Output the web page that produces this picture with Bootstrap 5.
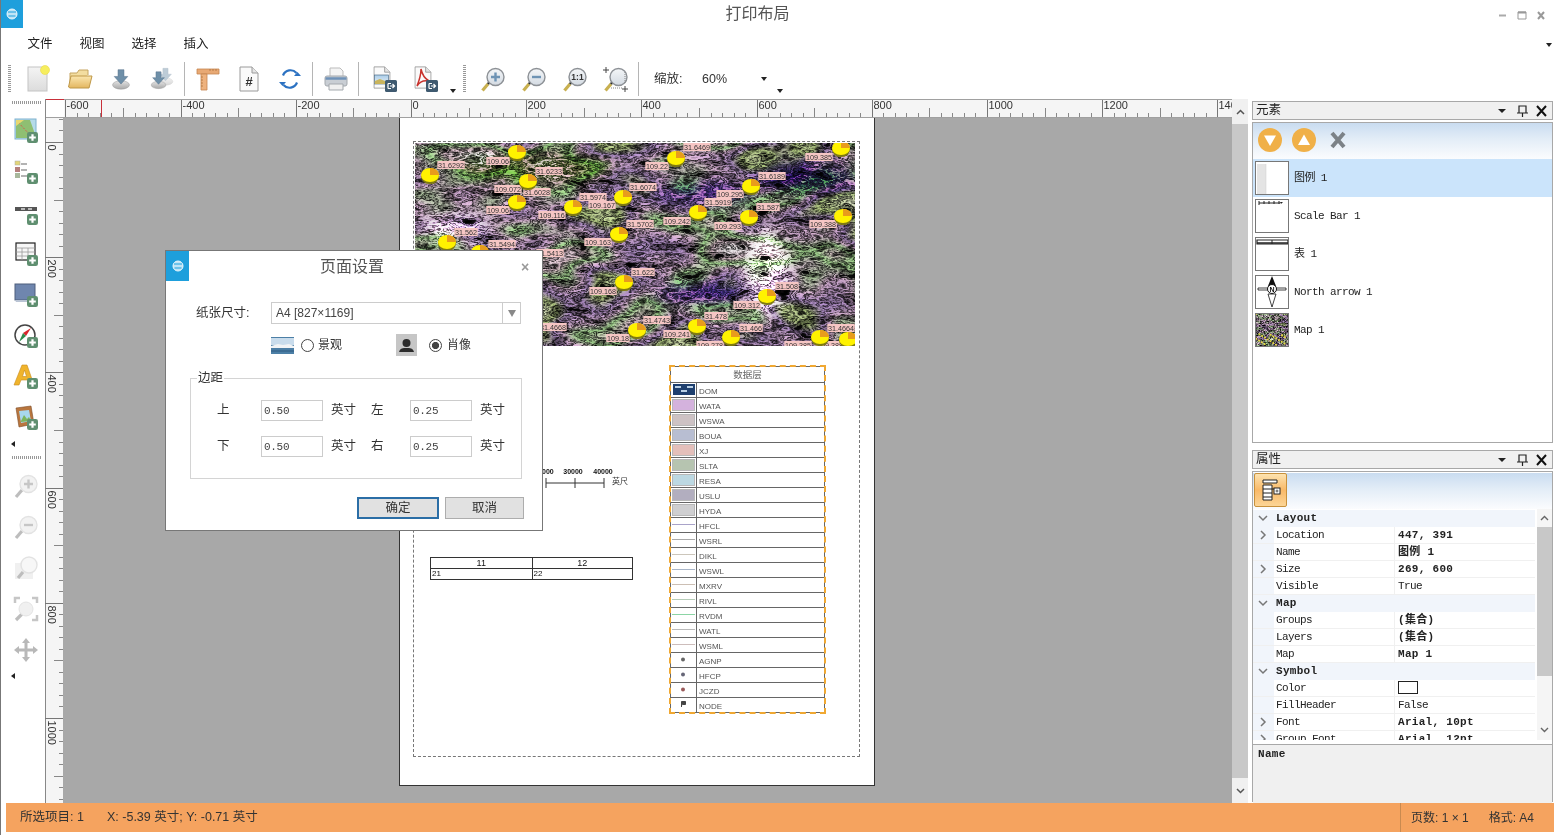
<!DOCTYPE html>
<html lang="zh">
<head>
<meta charset="UTF-8">
<title>打印布局</title>
<link href="https://cdn.jsdelivr.net/npm/bootstrap@5.3.3/dist/css/bootstrap.min.css" rel="stylesheet">
<style>
html, body { height: 835px; overflow: hidden; }
body { background: #fff; color: #222; font-family: "Liberation Sans", "Noto Sans CJK SC", sans-serif; font-size: 12px; border-left: 1px solid #777; }
svg { display: block; flex: none; }
.app-logo { width: 23px; height: 28px; background: #1e9fdc; margin-left: -1px; }
.title-bar { height: 28px; }
.title-text { font-size: 16px; color: #555; padding-right: 3px; padding-top: 2px; }
.menu-bar { height: 32px; padding-left: 13px; padding-right: 6px; padding-top: 7px; font-size: 12.5px; color: #222; }
.menu-item { width: 52px; text-align: center; }
.tool-bar { height: 38px; margin-bottom: 1px; padding-left: 7px; }
.grip-v { width: 3px; height: 28px; background: repeating-linear-gradient(180deg, #999 0 1px, #fff 1px 2px); }
.grip-h { width: 29px; height: 3px; margin-left: 11px; background: repeating-linear-gradient(90deg, #999 0 1px, #fff 1px 2px); }
.tool-btn { width: 41px; height: 38px; }
.tool-sep { width: 1px; height: 34px; background: #b5b5b5; margin: 0 2px; }
.tool-sep.is-wide { margin-right: 5px; }
.mini-down { width: 0; height: 0; border-left: 3.5px solid transparent; border-right: 3.5px solid transparent; border-top: 4px solid #222; }
.mini-left { width: 0; height: 0; border-top: 3.5px solid transparent; border-bottom: 3.5px solid transparent; border-right: 4px solid #222; margin-left: 10px; }
.zoom-lbl { font-size: 12.5px; color: #333; margin-left: 13px; width: 48px; }
.zoom-val { font-size: 12.5px; color: #333; width: 59px; }
.main-row { height: 704px; }
.left-tool { width: 44px; }
.left-btn { width: 44px; height: 41px; padding-left: 5px; }
.work-area { width: 1187px; }
.ruler-top { height: 19px; }
.ruler-left { width: 18px; }
.canvas-area { background: #a8a8a8; }
.sheet { width: 476px; height: 669px; margin-left: 336px; margin-top: -1px; background: #fff; border: 1px solid #333; }
.sheet-margin { left: 13px; top: 23px; width: 447px; height: 616px; border: 1px dashed #777; }
.sheet-map { left: 15px; top: 25px; width: 440px; height: 203px; }
.sheet-legend { left: 270px; top: 248px; width: 155px; height: 347px; outline: 2px dashed #f0a832; outline-offset: -1px; border: 1px solid #666; font-size: 8px; color: #555; }
.leg-title { height: 15px; line-height: 15px; text-align: center; font-size: 9.5px; color: #666; }
.leg-row { height: 15px; border-top: 1px solid #666; line-height: 17px; }
.leg-swatch { width: 26px; border-right: 1px solid #666; }
.leg-name { padding-left: 2px; }
.swatch-fill { width: 23px; height: 12px; margin: 1px 0 0 1px; border: 1px solid #b8b8b8; }
.swatch-line { height: 1px; width: 23px; margin: 6px 0 0 1px; }
.sheet-table { left: 30px; top: 439px; width: 203px; height: 23px; border: 1px solid #333; font-size: 8px; color: #111; }
.tbl-head { height: 11px; border-bottom: 1px solid #333; line-height: 11px; font-size: 9px; }
.tbl-cell { width: 50%; }
.tbl-cell + .tbl-cell { border-left: 1px solid #333; }
.tbl-body { height: 10px; line-height: 10px; padding-left: 1px; }
.sheet-scale { left: 130px; top: 347px; }
.vscroll { width: 16px; background: #f0f0f0; }
.vscroll-arrow { height: 25px; }
.vscroll-thumb { background: #c8c8c8; height: 654px; }
.side-col { width: 301px; margin-left: 4px; padding-top: 2px; }
.dock-head { height: 19px; background: #f0f0f0; border: 1px solid #a8a8a8; padding: 0 4px 0 3px; font-size: 12.5px; line-height: 17px; }
.dock-body { border: 1px solid #a8a8a8; margin-top: 2px; }
.dock-tools { height: 36px; background: linear-gradient(180deg, #c9dcf0 0, #e3edf7 45%, #fbfcfe 100%); }
.el-row { height: 38px; padding-left: 2px; }
.el-row.is-on { background: #cbe4fb; }
.el-thumb { width: 34px; height: 34px; border: 1px solid #777; background: #fff; }
.mono-txt { font-family: "Liberation Mono", "Noto Sans CJK SC", monospace; font-size: 11px; letter-spacing: -.6px; color: #222; }
.el-name { margin-left: 5px; }
.prop-btn { width: 33px; height: 34px; margin: 1px 0 0 1px; border: 1px solid #c8913c; border-radius: 2px; background: linear-gradient(180deg, #fde3b0 0, #f9b968 50%, #fcd596 100%); }
.prop-grid { height: 235px; }
.prop-main { width: 283px; height: 231px; padding-top: 1px; }
.prop-row { height: 17px; line-height: 16px; border-bottom: 1px solid #f0f0f0; }
.prop-row.is-cat { background: #f1f5fb; border-bottom: 0; }
.prop-gut { width: 21px; background: #f1f5fb; }
.prop-key { width: 120px; padding-left: 2px; }
.prop-val { padding-left: 3px; border-left: 1px solid #f0f0f0; }
.is-cat .prop-key { width: 240px; }
.mono-bold { font-weight: 700; letter-spacing: .3px; }
.prop-swatch { width: 20px; height: 13px; border: 1px solid #222; margin-top: 1px; }
.prop-scroll { width: 15px; margin-left: 2px; background: #f5f5f5; height: 231px; }
.prop-thumb { height: 149px; background: #c8c8c8; }
.prop-desc { height: 59px; background: #f0f0f0; border-top: 1px solid #a8a8a8; padding: 1px 0 0 5px; }
.status-bar { height: 29px; margin: 0 4px 0 5px; background: #f5a35f; font-size: 12.5px; color: #333; padding-left: 14px; }
.status-right { border-left: 1px solid #c98a50; height: 29px; padding-left: 10px; padding-right: 20px; margin-left: auto; width: 154px; font-size: 12px; }
.page-dlg { left: 165px; top: 250px; width: 378px; height: 281px; background: #fff; border: 1px solid #777; }
.dlg-logo { width: 23px; height: 30px; background: #1e9fdc; }
.dlg-title { font-size: 16px; color: #555; padding-right: 6px; padding-top: 1px; }
.dlg-close { width: 21px; font-size: 14px; font-weight: 700; color: #999; padding-top: 3px; }
.dlg-row1 { margin: 21px 0 0 30px; height: 22px; }
.dlg-lbl { width: 75px; font-size: 12.5px; color: #333; }
.paper-select { width: 250px; height: 22px; border: 1px solid #ccc; padding-left: 4px; font-size: 12px; color: #444; }
.paper-arrow { width: 18px; height: 20px; border-left: 1px solid #ccc; }
.arrow-gray { width: 0; height: 0; border-left: 4px solid transparent; border-right: 4px solid transparent; border-top: 7px solid #888; }
.dlg-row2 { margin: 10px 0 0 105px; height: 22px; font-size: 12px; color: #333; }
.page-radio.form-check-input { width: 13px; height: 13px; margin: 0 4px 0 7px; background-color: #fff; border: 1px solid #444; background-image: none; box-shadow: none; }
.page-radio.form-check-input:checked { background-color: #fff; border-color: #444; background-image: radial-gradient(circle, #444 0 3.4px, #fff 3.8px); }
.orient-b { margin-left: 54px; }
.dlg-margins { margin: 14px 0 0 24px; width: 332px; height: 109px; border: 1px solid #d4d4d4; padding: 0 0 0 26px; }
.dlg-margins legend { float: none; width: auto; margin: 0 0 0 -20px; padding: 0 1px; font-size: 12.5px; line-height: 16px; color: #333; }
.margin-grid { display: grid; grid-template-columns: 44px 62px 48px 39px 62px 40px; row-gap: 15px; margin-top: 14px; align-items: center; font-size: 12.5px; color: #333; white-space: nowrap; }
.margin-inp.form-control { height: 21px; min-height: 0; padding: 0 2px; border: 1px solid #ccc; border-radius: 0; box-shadow: none; font-family: "Liberation Mono", monospace; font-size: 11px; color: #444; letter-spacing: -.3px; }
.margin-unit { padding-left: 8px; }
.dlg-btns { margin: 18px 18px 0 0; gap: 6px; }
.dlg-btn.btn { height: 22px; padding: 0; border-radius: 0; background: #e1e1e1; color: #333; font-size: 12.5px; line-height: 18px; border: 1px solid #adadad; width: 79px; }
.dlg-btn.is-main { width: 82px; border: 2px solid #2b6ea6; }
.map-light { mix-blend-mode: overlay; }
</style>
</head>
<body>
<svg width="0" height="0" class="position-absolute">
  <defs>
    <linearGradient id="glass" x1="0" y1="0" x2="0" y2="1"><stop offset="0" stop-color="#f4f6f8"/><stop offset="1" stop-color="#d3dae2"/></linearGradient>
    <linearGradient id="pageg" x1="0" y1="0" x2="0" y2="1"><stop offset="0" stop-color="#f4f4f4"/><stop offset="1" stop-color="#dcdcdc"/></linearGradient>
    <linearGradient id="foldg" x1="0" y1="0" x2="0" y2="1"><stop offset="0" stop-color="#fbe6ae"/><stop offset="1" stop-color="#e3b660"/></linearGradient>
    <linearGradient id="discg" x1="0" y1="0" x2="0" y2="1"><stop offset="0" stop-color="#e4e4e4"/><stop offset="1" stop-color="#a8a8a8"/></linearGradient>
    <linearGradient id="sky" x1="0" y1="0" x2="0" y2="1"><stop offset="0" stop-color="#a9cce8"/><stop offset="1" stop-color="#e8f0f6"/></linearGradient>
    <filter id="terrain" x="0" y="0" width="100%" height="100%" color-interpolation-filters="sRGB">
      <feTurbulence type="fractalNoise" baseFrequency="0.045 0.11" numOctaves="5" seed="3" result="a"/>
      <feColorMatrix in="a" values="1 0 0 0 0 1 0 0 0 0 1 0 0 0 0 0 0 0 0 1"/>
      <feComponentTransfer result="lum">
        <feFuncR type="table" tableValues="0 0 0 .03 .06 .6 .1 .55 .95 .25 .8 .16 .95 1 .7 1 1"/>
        <feFuncG type="table" tableValues="0 0 0 .03 .06 .6 .1 .55 .95 .25 .8 .16 .95 1 .7 1 1"/>
        <feFuncB type="table" tableValues="0 0 0 .03 .06 .6 .1 .55 .95 .25 .8 .16 .95 1 .7 1 1"/>
      </feComponentTransfer>
      <feTurbulence type="fractalNoise" baseFrequency="0.012 0.022" numOctaves="2" seed="8" result="b"/>
      <feColorMatrix in="b" values="1 0 0 0 0 1 0 0 0 0 1 0 0 0 0 0 0 0 0 1"/>
      <feComponentTransfer result="tint">
        <feFuncR type="table" tableValues="1 1 .9 .72 .72 .9 .66 .95 1 1 1"/>
        <feFuncG type="table" tableValues="1 1 .95 .82 .58 .74 .88 .82 1 1 1"/>
        <feFuncB type="table" tableValues="1 1 .75 .52 .82 .88 .58 .88 1 1 1"/>
      </feComponentTransfer>
      <feBlend in="lum" in2="tint" mode="multiply"/>
    </filter>
    <filter id="soft"><feGaussianBlur stdDeviation="7"/></filter>
    <symbol id="add" viewBox="0 0 10 10"><rect width="10" height="10" rx="2" fill="#5f8f70"/><path d="M5 2v6M2 5h6" stroke="#fff" stroke-width="2"/></symbol>
    <symbol id="mag" viewBox="0 0 26 26"><path d="M2.5 24.5 8 18" stroke="#c8b050" stroke-width="3.2"/><path d="M8 18l2.5-3" stroke="#222" stroke-width="2.6"/><circle cx="15.5" cy="11" r="8.500" fill="url(#glass)" stroke="#8d9196" stroke-width="1.4"/></symbol>
    <symbol id="saver" viewBox="0 0 26 26"><ellipse cx="13" cy="20" rx="10" ry="5" fill="url(#discg)" stroke="#999" stroke-width=".6"/><path d="M9.5 2h7v8h4.500L13 19 5 10h4.500z" fill="#6e8fa8" stroke="#54708a" stroke-width=".6"/></symbol>
    <symbol id="out-badge" viewBox="0 0 12 12"><rect width="12" height="12" rx="1.500" fill="#3f5a70"/><path d="M3 3.500h3M3 8.500h3M3 3.500v5M5 6h4M7.500 4 9.500 6 7.500 8" stroke="#fff" stroke-width="1.200" fill="none"/></symbol>
    <symbol id="fold-page" viewBox="0 0 20 26"><path d="M1 1h12l6 6v18H1z" fill="#fafafa" stroke="#9a9a9a"/><path d="M13 1v6h6" fill="#e4e4e4" stroke="#9a9a9a"/></symbol>
  </defs>
</svg>

<div class="title-bar d-flex">
  <div class="app-logo d-flex align-items-center justify-content-center">
    <svg width="14" height="14" viewBox="0 0 14 14"><circle cx="7" cy="7" r="5" fill="#bfe4f6" stroke="#e9f7fd"/><path d="M3 5h8M3.500 9h7" stroke="#1e9fdc" stroke-width="1.200"/></svg>
  </div>
  <div class="title-text flex-grow-1 text-center">打印布局</div>
  <svg width="63" height="28" viewBox="0 0 63 28"><path d="M4 15.500h7" stroke="#aaa" stroke-width="2"/><path d="M23 12h8v7h-8z" fill="none" stroke="#999"/><path d="M23 12.500h8" stroke="#999" stroke-width="2"/><path d="M43 12l6 7M49 12l-6 7" stroke="#999" stroke-width="2"/></svg>
</div>

<div class="menu-bar d-flex">
  <div class="menu-item">文件</div>
  <div class="menu-item">视图</div>
  <div class="menu-item">选择</div>
  <div class="menu-item">插入</div>
  <div class="mini-down ms-auto mt-2"></div>
</div>

<div class="tool-bar d-flex align-items-center">
  <div class="grip-v"></div>
  <div style="width:7px"></div>
  <div class="tool-btn d-flex align-items-center justify-content-center"><svg width="26" height="30" viewBox="0 0 26 30"><rect x="2" y="3" width="19" height="24" fill="url(#pageg)" stroke="#c4c4c4"/><circle cx="19" cy="6" r="4.500" fill="#f6ee5e" stroke="#e9d84a" stroke-width=".6"/></svg></div>
  <div class="tool-btn d-flex align-items-center justify-content-center"><svg width="26" height="24" viewBox="0 0 26 24"><path d="M3 20V6h7l2-3h9v5" fill="#f3dda0" stroke="#c6a560"/><path d="M1.500 20 4 9h21l-3 12H3z" fill="url(#foldg)" stroke="#bf9848"/></svg></div>
  <div class="tool-btn d-flex align-items-center justify-content-center"><svg width="22" height="24" viewBox="0 0 26 26"><use href="#saver"/></svg></div>
  <div class="tool-btn d-flex align-items-center justify-content-center"><svg width="26" height="24" viewBox="0 0 30 26"><g opacity=".45"><svg x="8" y="-2" width="22" height="24" viewBox="0 0 26 26"><use href="#saver"/></svg></g><svg x="0" y="2" width="22" height="24" viewBox="0 0 26 26"><use href="#saver"/></svg></svg></div>
  <div class="tool-sep"></div>
  <div class="tool-btn d-flex align-items-center justify-content-center"><svg width="24" height="24" viewBox="0 0 24 24"><path d="M1 2h22v5H1z" fill="#e8a974" stroke="#c58650" stroke-width=".8"/><path d="M5 7h6v16H5z" fill="#eeb27e" stroke="#c58650" stroke-width=".8"/><path d="M14 2v2M17 2v2M20 2v2M5 10h2M5 13h2M5 16h2M5 19h2" stroke="#a56a38" stroke-width=".7"/></svg></div>
  <div class="tool-btn d-flex align-items-center justify-content-center"><svg width="20" height="26" viewBox="0 0 20 26"><use href="#fold-page"/><text x="10" y="20" text-anchor="middle" font-family="Liberation Sans" font-weight="700" font-size="13" fill="#333">#</text></svg></div>
  <div class="tool-btn d-flex align-items-center justify-content-center"><svg width="22" height="24" viewBox="0 0 22 24"><path d="M4 8.500A8 8 0 0 1 17.500 6M18 15.500A8 8 0 0 1 4.500 18" fill="none" stroke="#2c72c2" stroke-width="2.200"/><path d="M15 9h7l-3.500-4zM7 15H0l3.500 4z" fill="#2c72c2"/></svg></div>
  <div class="tool-sep"></div>
  <div class="tool-btn d-flex align-items-center justify-content-center"><svg width="24" height="24" viewBox="0 0 24 24"><path d="M6 1h10l3 3v7H6z" fill="#f4f4f4" stroke="#bbb"/><rect x="1" y="9" width="22" height="10" rx="2" fill="#c9ced4" stroke="#a4a9ae"/><path d="M1.500 11.500h21" stroke="#6f92b8" stroke-width="2.500"/><path d="M5 17h14v6H5z" fill="#f0f0f0" stroke="#a4a9ae"/></svg></div>
  <div class="tool-sep is-wide"></div>
  <div class="tool-btn d-flex align-items-center justify-content-center"><svg width="24" height="26" viewBox="0 0 24 26"><svg width="18" height="23" viewBox="0 0 20 26"><use href="#fold-page"/></svg><rect x="1.500" y="9" width="14" height="9" fill="url(#sky)" stroke="#516f8a" stroke-width=".7"/><path d="M1.800 18v-3l5-2 8 3v2z" fill="#c9b45c"/><svg x="12" y="14" width="12" height="12"><use href="#out-badge"/></svg></svg></div>
  <div class="tool-btn d-flex align-items-center justify-content-center"><svg width="24" height="26" viewBox="0 0 24 26"><svg width="18" height="23" viewBox="0 0 20 26"><use href="#fold-page"/></svg><path d="M7 3c1 5 3 9 8 12-5-1-9 0-12 5 2-5 4-10 4-17z" fill="none" stroke="#c8322c" stroke-width="1.500"/><svg x="12" y="14" width="12" height="12"><use href="#out-badge"/></svg></svg></div>
  <div class="mini-down ms-1 mt-4"></div>
  <div style="width:7px"></div>
  <div class="grip-v"></div>
  <div style="width:6px"></div>
  <div class="tool-btn d-flex align-items-center justify-content-center"><svg width="26" height="26" viewBox="0 0 26 26"><use href="#mag"/><path d="M15.500 6.500v9M11 11h9" stroke="#6e93b4" stroke-width="2.400"/></svg></div>
  <div class="tool-btn d-flex align-items-center justify-content-center"><svg width="26" height="26" viewBox="0 0 26 26"><use href="#mag"/><path d="M11 11h9" stroke="#6e93b4" stroke-width="2.400"/></svg></div>
  <div class="tool-btn d-flex align-items-center justify-content-center"><svg width="26" height="26" viewBox="0 0 26 26"><use href="#mag"/><text x="15.500" y="14" text-anchor="middle" font-family="Liberation Sans" font-weight="700" font-size="8.500" fill="#333">1:1</text></svg></div>
  <div class="tool-btn d-flex align-items-center justify-content-center"><svg width="26" height="26" viewBox="0 0 26 26"><use href="#mag"/><path d="M3 1v6M0 4h6M22 20v6M19 23h6" stroke="#444"/><path d="M8 22h12M22 6v12" stroke="#888" stroke-dasharray="1 1"/></svg></div>
  <div class="tool-sep"></div>
  <div class="zoom-lbl">缩放:</div>
  <div class="zoom-val">60%</div>
  <div class="mini-down"></div>
  <div class="mini-down mt-4" style="margin-left:10px"></div>
</div>

<div class="main-row d-flex">
  <div class="left-tool d-flex flex-column">
    <div class="grip-h" style="margin-top:2px;margin-bottom:6.5px"></div>
    <div class="left-btn d-flex align-items-center justify-content-center"><svg width="26" height="26" viewBox="0 0 26 26"><rect x="2" y="1" width="21" height="20" fill="#b5dbe9" stroke="#7fb1cf"/><path d="M3 2h14l5 14-6 4H3z" fill="#8fbf72"/><path d="M3 2l16 17" stroke="#d45e4c" stroke-dasharray="2 1.500"/><path d="M3 2h8l-8 6z" fill="#e8d870"/><svg x="14" y="14" width="11" height="11"><use href="#add"/></svg></svg></div>
    <div class="left-btn d-flex align-items-center justify-content-center"><svg width="26" height="26" viewBox="0 0 26 26"><rect x="2" y="2" width="5" height="4" fill="#e3d678" stroke="#aaa" stroke-width=".5"/><rect x="2" y="8" width="5" height="5" fill="#b47f7c"/><rect x="2" y="14" width="5" height="5" fill="#a8b89c"/><path d="M8 5h6M8 11h6M8 17h6" stroke="#9b9b9b" stroke-width="1.300"/><svg x="14" y="14" width="11" height="11"><use href="#add"/></svg></svg></div>
    <div class="left-btn d-flex align-items-center justify-content-center"><svg width="26" height="26" viewBox="0 0 26 26"><rect x="2" y="7" width="22" height="4" fill="#555"/><path d="M8 9h4M15 9h4" stroke="#ddd" stroke-width="1.500"/><svg x="14" y="14" width="11" height="11"><use href="#add"/></svg></svg></div>
    <div class="left-btn d-flex align-items-center justify-content-center"><svg width="26" height="26" viewBox="0 0 26 26"><rect x="3" y="2" width="19" height="17" fill="#f7f7f7" stroke="#222" stroke-width="1.200"/><path d="M3 7h19M3 11h19M3 15h19M9 7v12M15 7v12" stroke="#999" stroke-width=".8"/><svg x="14" y="14" width="11" height="11"><use href="#add"/></svg></svg></div>
    <div class="left-btn d-flex align-items-center justify-content-center"><svg width="26" height="26" viewBox="0 0 26 26"><rect x="2" y="2" width="20" height="16" fill="#6f86ae" stroke="#4e5f7c"/><path d="M2 18h20v2H3z" fill="#bac4d4"/><svg x="14" y="14" width="11" height="11"><use href="#add"/></svg></svg></div>
    <div class="left-btn d-flex align-items-center justify-content-center"><svg width="26" height="26" viewBox="0 0 26 26"><circle cx="12" cy="12" r="10" fill="#fff" stroke="#444" stroke-width="1.500"/><path d="M18 5l-5 8-3-3z" fill="#d8262c"/><path d="M6 19l4-9 3 3z" fill="#2e8b4c"/><svg x="14" y="14" width="11" height="11"><use href="#add"/></svg></svg></div>
    <div class="left-btn d-flex align-items-center justify-content-center"><svg width="26" height="26" viewBox="0 0 26 26"><path d="M1 21 9 1h5l7 20h-5l-1.500-5H8l-2 5zM9.500 12.500h4L11.500 6z" fill="#f0b42c" stroke="#c68a1e" stroke-width=".6" fill-rule="evenodd"/><svg x="14" y="14" width="11" height="11"><use href="#add"/></svg></svg></div>
    <div class="left-btn d-flex align-items-center justify-content-center"><svg width="26" height="26" viewBox="0 0 26 26"><path d="M3 3l15-2 3 18-15 3z" fill="#b9763e" stroke="#7c4c26" stroke-width=".6"/><path d="M6 6l10-1 2 11-10 2z" fill="#a7d7ec"/><path d="M7.500 17 11 10l3 4 2-2 2 4z" fill="#7db55a"/><svg x="14" y="14" width="11" height="11"><use href="#add"/></svg></svg></div>
    <div class="d-flex align-items-center" style="height:10px;margin-top:.5px"><div class="mini-left"></div></div>
    <div class="grip-h" style="margin-top:6.5px;margin-bottom:7px"></div>
    <div class="left-btn d-flex align-items-center justify-content-center"><svg width="26" height="26" viewBox="0 0 26 26" opacity=".55"><path d="M3 24 9 17" stroke="#888" stroke-width="3.200"/><circle cx="15.500" cy="11" r="8.500" fill="#e9e9e9" stroke="#ccc" stroke-width="1.400"/><path d="M15.500 6.500v9M11 11h9" stroke="#999" stroke-width="2.400"/></svg></div>
    <div class="left-btn d-flex align-items-center justify-content-center"><svg width="26" height="26" viewBox="0 0 26 26" opacity=".55"><path d="M3 24 9 17" stroke="#888" stroke-width="3.200"/><circle cx="15.500" cy="11" r="8.500" fill="#e9e9e9" stroke="#ccc" stroke-width="1.400"/><path d="M11 11h9" stroke="#999" stroke-width="2.400"/></svg></div>
    <div class="left-btn d-flex align-items-center justify-content-center"><svg width="26" height="26" viewBox="0 0 26 26" opacity=".55"><rect x="2" y="8" width="18" height="16" fill="#e4e4e4"/><path d="M5 23 10 17" stroke="#888" stroke-width="3.200"/><circle cx="16" cy="10" r="8" fill="#f2f2f2" stroke="#ccc" stroke-width="1.400"/></svg></div>
    <div class="left-btn d-flex align-items-center justify-content-center"><svg width="26" height="26" viewBox="0 0 26 26" opacity=".55"><path d="M2 7V2h5M19 2h5v5M24 19v5h-5" fill="none" stroke="#999" stroke-width="2.500"/><path d="M3 24l6-6" stroke="#888" stroke-width="3.200"/><circle cx="13" cy="13" r="7" fill="#e4e4e4" stroke="#ccc"/></svg></div>
    <div class="left-btn d-flex align-items-center justify-content-center"><svg width="24" height="24" viewBox="0 0 24 24" opacity=".6"><path d="M12 0l4 5h-2.500v5.500H19V8l5 4-5 4v-2.500h-5.500V19H16l-4 5-4-5h2.500v-5.500H5V16l-5-4 5-4v2.500h5.500V5H8z" fill="#8a8a8a"/></svg></div>
    <div class="d-flex align-items-center" style="height:10px"><div class="mini-left"></div></div>
  </div>

  <div class="work-area d-flex flex-column">
    <div class="ruler-top" id="rulerTop"></div>
    <div class="d-flex flex-grow-1 overflow-hidden">
      <div class="ruler-left" id="rulerLeft"></div>
      <div class="canvas-area flex-grow-1 overflow-hidden">
        <div class="sheet position-relative">
          <div class="sheet-margin position-absolute"></div>
          <div class="sheet-map position-absolute overflow-hidden" id="mapBox"></div>
          <svg class="sheet-scale position-absolute" width="110" height="26" viewBox="0 0 110 26">
            <path d="M16 18h58M16 13v10M45 13v10M74 13v10" stroke="#333" fill="none"/>
            <g font-family="Liberation Sans" font-size="7" font-weight="700" fill="#111" text-anchor="middle"><text x="14" y="9">20000</text><text x="43" y="9">30000</text><text x="73" y="9">40000</text></g>
            <text x="82" y="19" font-family="Noto Sans CJK SC" font-size="8" fill="#333">英尺</text>
          </svg>
          <div class="sheet-table position-absolute text-center">
            <div class="tbl-head d-flex"><div class="tbl-cell">11</div><div class="tbl-cell">12</div></div>
            <div class="d-flex text-start"><div class="tbl-cell tbl-body">21</div><div class="tbl-cell tbl-body">22</div></div>
          </div>
          <div class="sheet-legend position-absolute" id="legendBox"><div class="leg-title">数据层</div></div>
        </div>
      </div>
    </div>
  </div>

  <div class="vscroll d-flex flex-column">
    <div class="vscroll-arrow d-flex align-items-center justify-content-center"><svg width="9" height="6" viewBox="0 0 9 6"><path d="M1 5l3.500-3.500L8 5" fill="none" stroke="#555" stroke-width="1.500"/></svg></div>
    <div class="vscroll-thumb"></div>
    <div class="vscroll-arrow d-flex align-items-center justify-content-center"><svg width="9" height="6" viewBox="0 0 9 6"><path d="M1 1l3.500 3.500L8 1" fill="none" stroke="#555" stroke-width="1.500"/></svg></div>
  </div>

  <div class="side-col">
    <div class="dock-head d-flex align-items-center justify-content-between">
      <span>元素</span>
      <svg width="52" height="14" viewBox="0 0 52 14"><path d="M2 5h8l-4 4z" fill="#222"/><path d="M23 2h7v7h-7zM26.500 9v4M21 9h11" fill="none" stroke="#222" stroke-width="1.200"/><path d="M41 2l9 10M50 2l-9 10" stroke="#111" stroke-width="2"/></svg>
    </div>
    <div class="dock-body" style="height:321px">
      <div class="dock-tools">
        <svg width="100" height="36" viewBox="0 0 100 36"><circle cx="17" cy="17" r="12" fill="#f0b048"/><path d="M11 12.500h12L17 23z" fill="#fff"/><circle cx="51" cy="17" r="12" fill="#f0b048"/><path d="M45 22h12L51 11.500z" fill="#fff"/><path d="M79 10l12 14M91 10 79 24" stroke="#7c8287" stroke-width="4"/></svg>
      </div>
      <div class="el-row is-on d-flex align-items-center">
        <div class="el-thumb"><svg width="32" height="32" viewBox="0 0 32 32"><rect x="1" y="2" width="9" height="30" fill="#e4e4e4"/><path d="M10 2v30" stroke="#ccc" stroke-width=".5"/></svg></div>
        <span class="mono-txt el-name">图例 1</span>
      </div>
      <div class="el-row d-flex align-items-center">
        <div class="el-thumb"><svg width="32" height="32" viewBox="0 0 32 32"><path d="M3 3h21M3 1v4M8 1v3M13 1v3M18 1v3M23 1v3" stroke="#222"/><path d="M24 2h3l-2 2z" fill="#222"/></svg></div>
        <span class="mono-txt el-name">Scale Bar 1</span>
      </div>
      <div class="el-row d-flex align-items-center">
        <div class="el-thumb"><svg width="32" height="32" viewBox="0 0 32 32"><path d="M1 2h31v4H1z" fill="#fff" stroke="#222" stroke-width="1.200"/><path d="M16 2v4" stroke="#222"/><path d="M1 5h31" stroke="#222" stroke-width="1.500"/></svg></div>
        <span class="mono-txt el-name">表 1</span>
      </div>
      <div class="el-row d-flex align-items-center">
        <div class="el-thumb"><svg width="32" height="32" viewBox="0 0 32 32"><path d="M16 0l4 10h-8z" fill="#111"/><path d="M2 12h10v2H2zM20 12h10v2H20z" fill="#fff" stroke="#111" stroke-width=".8"/><path d="M12 18h8l-4 13z" fill="#fff" stroke="#111" stroke-width=".8"/><circle cx="16" cy="13" r="4.500" fill="#fff" stroke="#111"/><text x="16" y="16" text-anchor="middle" font-family="Liberation Sans" font-size="7" font-weight="700" fill="#111">N</text></svg></div>
        <span class="mono-txt el-name">North arrow 1</span>
      </div>
      <div class="el-row d-flex align-items-center">
        <div class="el-thumb" id="mapThumb"></div>
        <span class="mono-txt el-name">Map 1</span>
      </div>
    </div>
    <div class="dock-head d-flex align-items-center justify-content-between" style="margin-top:7px">
      <span>属性</span>
      <svg width="52" height="14" viewBox="0 0 52 14"><path d="M2 5h8l-4 4z" fill="#222"/><path d="M23 2h7v7h-7zM26.500 9v4M21 9h11" fill="none" stroke="#222" stroke-width="1.200"/><path d="M41 2l9 10M50 2l-9 10" stroke="#111" stroke-width="2"/></svg>
    </div>
    <div class="dock-body" style="height:331px">
      <div class="dock-tools">
        <div class="prop-btn d-flex align-items-center justify-content-center">
          <svg width="22" height="24" viewBox="0 0 22 24"><path d="M3 2h14v3H3zM3 7h9v15H3z" fill="#fff" stroke="#222"/><path d="M3 11h9M3 15h9M3 19h9M12 11h4" stroke="#222"/><rect x="14" y="10" width="6" height="6" fill="#fff" stroke="#222"/><path d="M15.500 13h3M17 11.500v3" stroke="#222" stroke-width=".7"/></svg>
        </div>
      </div>
      <div class="prop-grid d-flex overflow-hidden">
        <div class="prop-main overflow-hidden" id="propRows"></div>
        <div class="prop-scroll d-flex flex-column">
          <div class="d-flex align-items-center justify-content-center" style="height:18px"><svg width="9" height="6" viewBox="0 0 9 6"><path d="M1 5l3.500-3.500L8 5" fill="none" stroke="#666" stroke-width="1.400"/></svg></div>
          <div class="prop-thumb"></div>
          <div class="d-flex align-items-center justify-content-center" style="height:64px;padding-top:44px"><svg width="9" height="6" viewBox="0 0 9 6"><path d="M1 1l3.500 3.500L8 1" fill="none" stroke="#666" stroke-width="1.400"/></svg></div>
        </div>
      </div>
      <div class="prop-desc mono-txt mono-bold">Name</div>
    </div>
  </div>
</div>

<div class="status-bar d-flex align-items-center">
  <span style="width:87px">所选项目: 1</span>
  <span>X: -5.39 英寸; Y: -0.71 英寸</span>
  <div class="status-right d-flex align-items-center justify-content-between">
    <span>页数: 1 × 1</span>
    <span>格式: A4</span>
  </div>
</div>

<div class="page-dlg position-absolute">
  <div class="d-flex align-items-center">
    <div class="dlg-logo d-flex align-items-center justify-content-center"><svg width="14" height="14" viewBox="0 0 14 14"><circle cx="7" cy="7" r="5" fill="#bfe4f6" stroke="#e9f7fd"/><path d="M3 5h8M3.500 9h7" stroke="#1e9fdc" stroke-width="1.200"/></svg></div>
    <div class="dlg-title flex-grow-1 text-center">页面设置</div>
    <div class="dlg-close">×</div>
  </div>
  <div class="dlg-row1 d-flex align-items-center">
    <div class="dlg-lbl">纸张尺寸:</div>
    <div class="paper-select d-flex align-items-center justify-content-between">
      <span>A4 [827×1169]</span>
      <div class="paper-arrow d-flex align-items-center justify-content-center"><div class="arrow-gray"></div></div>
    </div>
  </div>
  <div class="dlg-row2 d-flex align-items-center">
    <svg width="23" height="17" viewBox="0 0 23 17"><rect width="23" height="17" fill="#4c7fa6"/><rect y="1" width="23" height="7" fill="#c9dcec"/><path d="M0 9l7-2 5 1 6-1 5 2v2H0z" fill="#f2f4f6"/><path d="M0 14h23" stroke="#2c5a80"/></svg>
    <input class="form-check-input page-radio" type="radio" name="orient" aria-label="景观">
    <span>景观</span>
    <svg class="orient-b" width="21" height="22" viewBox="0 0 21 22"><rect width="21" height="22" fill="#c6c6c6"/><circle cx="10.500" cy="9" r="4" fill="#2c2c2c"/><path d="M3 18c1-4 4-4 7.500-4s6.500 0 7.500 4z" fill="#2c2c2c"/></svg>
    <input class="form-check-input page-radio" type="radio" name="orient" checked aria-label="肖像" style="margin-left:12px;margin-right:5px">
    <span>肖像</span>
  </div>
  <fieldset class="dlg-margins">
    <legend>边距</legend>
    <div class="margin-grid">
      <span>上</span><input class="form-control margin-inp" value="0.50"><span class="margin-unit">英寸</span><span>左</span><input class="form-control margin-inp" value="0.25"><span class="margin-unit">英寸</span>
      <span>下</span><input class="form-control margin-inp" value="0.50"><span class="margin-unit">英寸</span><span>右</span><input class="form-control margin-inp" value="0.25"><span class="margin-unit">英寸</span>
    </div>
  </fieldset>
  <div class="dlg-btns d-flex justify-content-end">
    <button type="button" class="btn dlg-btn is-main">确定</button>
    <button type="button" class="btn dlg-btn">取消</button>
  </div>
</div>

<script>
    // rulers: 200 units = 115.2px, origin taken from the screenshot
    function rulerTop() {
        const w = 1187, h = 19, x0 = 412 - 46;
        let s = `<svg width="${w}" height="${h}"><rect width="${w}" height="${h}" fill="#f5f5f5"/><path d="M0 .5H${w}M0 18.500H${w}" stroke="#a0a0a0" fill="none"/>`;
        for (let u = -600; u <= 1400; u += 20) {
            const x = Math.round(x0 + u * 0.576) + .5;
            if (u % 200 === 0) {
                s += `<path d="M${x} 1V18" stroke="#777"/><text x="${x + 1}" y="10" font-family="Liberation Sans" font-size="11" fill="#333">${u}</text>`;
            } else if (u % 100 === 0) {
                s += `<path d="M${x} 9V18" stroke="#888"/>`;
            } else {
                s += `<path d="M${x} 14V18" stroke="#888"/>`;
            }
        }
        s += `<rect x="0" y="0" width="19" height="18" fill="#fff"/><path d="M0 .5h19" stroke="#c8303a"/><path d="M.5 0V${h}" stroke="#888"/><path d="M56.500 1V18" stroke="#c8303a"/></svg>`;
        document.getElementById("rulerTop").innerHTML = s;
    }
    function rulerLeft() {
        const w = 18, h = 685, y0 = 142 - 118;
        let s = `<svg width="${w}" height="${h}"><rect width="${w}" height="${h}" fill="#f5f5f5"/><path d="M.5 0V${h}" stroke="#888"/>`;
        for (let u = -40; u <= 1140; u += 20) {
            const y = Math.round(y0 + u * 0.576) + .5;
            if (u % 200 === 0) {
                s += `<path d="M0 ${y}H18" stroke="#777"/><text transform="translate(3 ${y + 2}) rotate(90)" font-family="Liberation Sans" font-size="11" fill="#333">${u}</text>`;
            } else if (u % 100 === 0) {
                s += `<path d="M9 ${y}H18" stroke="#888"/>`;
            } else {
                s += `<path d="M14 ${y}H18" stroke="#888"/>`;
            }
        }
        document.getElementById("rulerLeft").innerHTML = s + `</svg>`;
    }

    // map pins, coordinates read off the screenshot
    const pies = [[517,152],[676,158],[841,148],[430,175],[528,181],[751,186],[517,202],[623,197],[573,207],[698,212],[749,217],[843,216],[447,242],[619,234],[480,252],[624,282],[767,296],[637,330],[697,326],[731,337],[820,337],[848,339]];
    const tags = [["31.6469",697,147],["109.22",657,166],["109.385",819,157],["109.06",498,161],["31.6292",451,165],["31.6233",549,171],["31.6189",772,176],["31.6074",643,187],["109.072",508,189],["31.6028",537,192],["109.295",730,194],["31.5974",593,197],["31.5919",718,202],["109.167",602,205],["31.587",768,207],["109.06",498,210],["109.116",552,215],["109.242",677,221],["31.5702",640,224],["109.293",728,226],["109.388",823,224],["31.562",466,232],["31.5494",502,244],["109.163",598,242],["31.5413",550,253],["31.622",643,272],["109.168",603,291],["31.508",787,286],["109.312",747,305],["31.4743",657,320],["31.478",716,316],["31.466",751,328],["31.4664",841,328],["109.18",618,338],["109.241",677,334],["109.278",710,345],["109.385",798,345],["109.388",830,345],["31.4668",553,327]];

    function terrainLayers() {
        return `<rect width="440" height="203" fill="#777" filter="url(#terrain)"/>
            <g filter="url(#soft)" class="map-light">
              <ellipse cx="352" cy="130" rx="24" ry="44" fill="#fff"/>
              <ellipse cx="40" cy="85" rx="34" ry="14" fill="#fff"/>
              <ellipse cx="290" cy="150" rx="50" ry="8" fill="#2c2070"/>
              <ellipse cx="290" cy="50" rx="50" ry="8" fill="#2c2070"/>
              <ellipse cx="392" cy="35" rx="50" ry="14" fill="#1e1850"/>
              <ellipse cx="120" cy="25" rx="80" ry="14" fill="#4e6830"/>
            </g>`;
    }
    function drawMap() {
        let s = `<svg width="440" height="203" viewBox="0 0 440 203">` + terrainLayers();
        tags.forEach(([t, x, y]) => {
            const w = t.length * 3.9, cx = x - 415, cy = y - 143;
            s += `<rect x="${cx - w / 2}" y="${cy - 4}" width="${w}" height="8" fill="#f6c6c4"/><text x="${cx}" y="${cy + 2.6}" text-anchor="middle" font-family="Liberation Sans" font-size="7.200" fill="#333">${t}</text>`;
        });
        pies.forEach(([x, y]) => {
            const cx = x - 415, cy = y - 143;
            s += `<g transform="translate(${cx} ${cy})"><ellipse cy="1.600" rx="9" ry="7.500" fill="#7f7a12"/><ellipse rx="9" ry="7" fill="#fff200"/><path d="M0 0V-7A9 7 0 0 1 9 0z" fill="#e89c1c"/></g>`;
        });
        document.getElementById("mapBox").innerHTML = s + `</svg>`;
        let t = `<svg width="32" height="32" viewBox="0 0 220 220"><rect width="220" height="220" fill="#777" filter="url(#terrain)"/><g fill="#e8d840">`;
        for (let i = 0; i < 20; i++) t += `<circle cx="${(i * 137) % 215}" cy="${(i * 211) % 215}" r="7"/>`;
        document.getElementById("mapThumb").innerHTML = t + `</g></svg>`;
    }

    // legend rows
    const legend = [["DOM","dom"],["WATA","#d4b2dd"],["WSWA","#cdc2c4"],["BOUA","#b8bed2"],["XJ","#e4bfba"],["SLTA","#b6c4b0"],["RESA","#bcd8e2"],["USLU","#b2aebf"],["HYDA","#cfcfd1"],
        ["HFCL","l#a9a3c9"],["WSRL","l#aaaaaa"],["DIKL","l#ccc6bb"],["WSWL","l#a9b6c9"],["MXRV","l#ccbfb4"],["RIVL","l#b7cdb9"],["RVDM","l#8cd5a5"],["WATL","l#bbbbbb"],["WSML","l#cdbdbb"],
        ["AGNP","p#666666"],["HFCP","p#666677"],["JCZD","p#9a5a5a"],["NODE","f#444444"]];
    function drawLegend() {
        const box = document.getElementById("legendBox");
        let s = "";
        legend.forEach(([name, kind]) => {
            let sw;
            if (kind === "dom") {
                sw = `<svg width="22" height="11" viewBox="0 0 22 11" style="margin:1px 0 0 2px"><rect width="22" height="11" fill="#1e3f6e"/><path d="M2 3h6M14 3h6M8 7h6" stroke="#b8cfe4" stroke-width="2"/></svg>`;
            } else if (kind[0] === "#") {
                sw = `<div class="swatch-fill" style="background:${kind}"></div>`;
            } else if (kind[0] === "l") {
                sw = `<div class="swatch-line" style="background:${kind.slice(1)}"></div>`;
            } else if (kind[0] === "p") {
                sw = `<svg width="24" height="14"><circle cx="12" cy="6.500" r="2" fill="${kind.slice(1)}"/></svg>`;
            } else {
                sw = `<svg width="24" height="14"><path d="M10.500 9V3.500h4v3h-3" fill="${kind.slice(1)}" stroke="${kind.slice(1)}"/></svg>`;
            }
            s += `<div class="leg-row d-flex"><div class="leg-swatch">${sw}</div><div class="leg-name">${name}</div></div>`;
        });
        box.insertAdjacentHTML("beforeend", s);
    }

    // property grid
    const props = [["c","Layout"],["e","Location","447, 391",1],["","Name","图例 1",1],["e","Size","269, 600",1],["","Visible","True",0],
        ["c","Map"],["","Groups","(集合)",1],["","Layers","(集合)",1],["","Map","Map 1",1],
        ["c","Symbol"],["","Color","#",0],["","FillHeader","False",0],["e","Font","Arial, 10pt",1],["e","Group Font","Arial, 12pt",1]];
    function drawProps() {
        const chev = (d) => `<svg width="21" height="16" viewBox="0 0 21 16"><path d="${d}" fill="none" stroke="#777" stroke-width="1.500"/></svg>`;
        let s = "";
        props.forEach((p) => {
            if (p[0] === "c") {
                s += `<div class="prop-row is-cat d-flex mono-txt"><div class="prop-gut">${chev("M6 6l4 4 4-4")}</div><div class="prop-key mono-bold">${p[1]}</div></div>`;
            } else {
                const val = p[2] === "#" ? `<div class="prop-swatch"></div>` : p[2];
                s += `<div class="prop-row d-flex mono-txt"><div class="prop-gut">${p[0] === "e" ? chev("M8 4l4 4-4 4") : ""}</div><div class="prop-key">${p[1]}</div><div class="prop-val ${p[3] ? "mono-bold" : ""}">${val}</div></div>`;
            }
        });
        document.getElementById("propRows").innerHTML = s;
    }

    rulerTop();
    rulerLeft();
    drawMap();
    drawLegend();
    drawProps();
</script>
<script src="https://cdn.jsdelivr.net/npm/bootstrap@5.3.3/dist/js/bootstrap.bundle.min.js"></script>
</body>
</html>
